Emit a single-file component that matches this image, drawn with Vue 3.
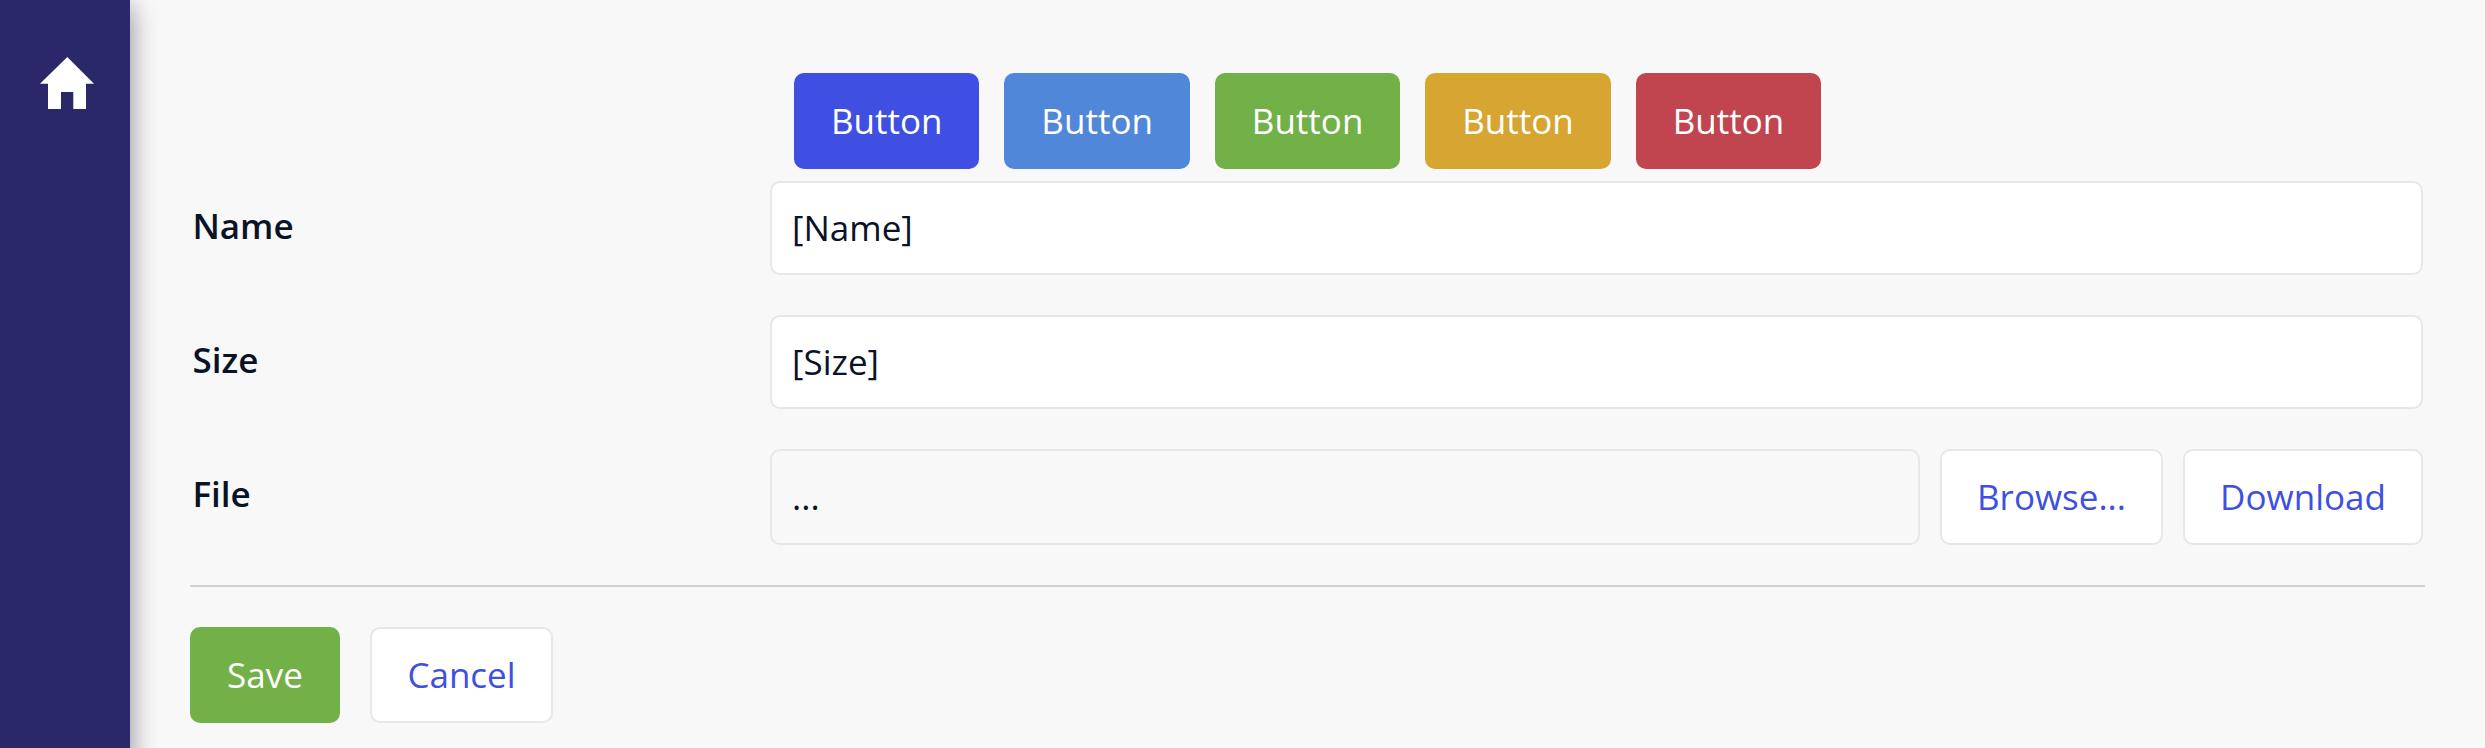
<script setup>
const buttons = ['primary', 'info', 'success', 'warning', 'danger']
</script>

<template>
  <div class="page">
    <nav class="sidebar">
      <svg class="home" viewBox="0 0 54 52" aria-label="Home">
        <path d="M27.3 0 L54 26.8 H46 V52 H33.3 V35 H21 V52 H8 V26.8 H0 Z" fill="#fff" />
      </svg>
    </nav>
    <main class="content">
      <div class="toolbar">
        <button v-for="kind in buttons" :key="kind" class="btn" :class="kind">Button</button>
      </div>
      <div class="row">
        <label class="label">Name</label>
        <div class="field">[Name]</div>
      </div>
      <div class="row">
        <label class="label">Size</label>
        <div class="field">[Size]</div>
      </div>
      <div class="row file-row">
        <label class="label">File</label>
        <div class="field readonly">...</div>
        <button class="btn plain browse">Browse...</button>
        <button class="btn plain download">Download</button>
      </div>
      <div class="footer">
        <button class="btn success save">Save</button>
        <button class="btn plain cancel">Cancel</button>
      </div>
    </main>
  </div>
</template>

<style>
body {
  margin: 0;
  overflow: hidden;
}
</style>

<style scoped>
.page {
  display: flex;
  height: 748px;
  background: #f8f8f8;
  color: #0a1326;
  font-family: "Open Sans", "Noto Sans", sans-serif;
  font-size: 35px;
  line-height: 48px;
  overflow: hidden;
}
.sidebar {
  box-sizing: border-box;
  flex: 0 0 130px;
  height: 800px;
  padding: 57px 0 0 40px;
  background: #2a2869;
  box-shadow: 2px 6px 24px rgba(0, 0, 0, 0.4);
}
.home {
  display: block;
  width: 54px;
  height: 52px;
}
.content {
  flex: 1;
  padding: 73px 60px 0;
}
.toolbar {
  display: flex;
  gap: 25.05px;
  margin-left: 604px;
  margin-bottom: 12px;
}
.btn {
  box-sizing: border-box;
  flex: none;
  width: 185.4px;
  height: 96px;
  padding: 0;
  border: 0;
  border-radius: 10px;
  color: #fff;
  font: inherit;
  text-align: center;
}
.primary { background: #3e4fe1; }
.info { background: #5187d8; }
.success { background: #72b048; }
.warning { background: #d6a532; }
.danger { background: #c1454f; }
.plain {
  border: 2px solid #e7e7e7;
  background: #fff;
  color: #3e4fe1;
}
.row {
  display: flex;
  height: 94px;
  margin-right: 2px;
  margin-bottom: 40px;
}
.label {
  box-sizing: border-box;
  flex: 0 0 580px;
  padding: 21px 0 0 2.4px;
  font-weight: 600;
}
.field {
  box-sizing: border-box;
  flex: 1;
  padding: 21px 20px;
  border: 2px solid #e7e7e7;
  border-radius: 10px;
  background: #fff;
}
.file-row {
  height: 96px;
}
.readonly {
  padding-top: 22px;
  background: #f8f8f8;
}
.browse {
  width: 223px;
  margin-left: 20px;
}
.download {
  width: 240px;
  margin-left: 20px;
}
.footer {
  display: flex;
  gap: 30px;
  padding-top: 40px;
  border-top: 2px solid #cfd0d6;
}
.save { width: 150px; }
.cancel { width: 183px; }
</style>
